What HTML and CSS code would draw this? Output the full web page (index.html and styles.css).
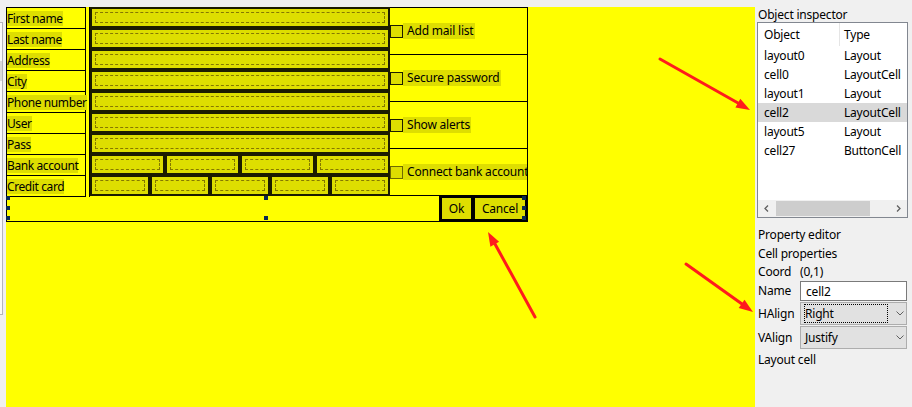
FILE: index.html
```html
<!DOCTYPE html>
<html lang="en">
<head>
<meta charset="utf-8">
<title>Layout designer</title>
<link rel="stylesheet" href="styles.css">
</head>
<body>
<div class="app">
  <div class="workspace">
    <div class="ghost"><div class="ghost-sel"></div></div>
    <div class="canvas">
      <div class="form">
        <div class="labels">
          <div class="lbl"><span>First name</span></div>
          <div class="lbl"><span>Last name</span></div>
          <div class="lbl"><span>Address</span></div>
          <div class="lbl"><span>City</span></div>
          <div class="lbl"><span>Phone number</span></div>
          <div class="lbl"><span>User</span></div>
          <div class="lbl"><span>Pass</span></div>
          <div class="lbl"><span>Bank account</span></div>
          <div class="lbl"><span>Credit card</span></div>
        </div>
        <div class="fields">
          <div class="frow"><div class="inp"><i></i></div></div>
          <div class="frow"><div class="inp"><i></i></div></div>
          <div class="frow"><div class="inp"><i></i></div></div>
          <div class="frow"><div class="inp"><i></i></div></div>
          <div class="frow"><div class="inp"><i></i></div></div>
          <div class="frow"><div class="inp"><i></i></div></div>
          <div class="frow"><div class="inp"><i></i></div></div>
          <div class="frow"><div class="inp"><i></i></div><div class="inp"><i></i></div><div class="inp"><i></i></div><div class="inp"><i></i></div></div>
          <div class="frow"><div class="inp"><i></i></div><div class="inp"><i></i></div><div class="inp"><i></i></div><div class="inp"><i></i></div><div class="inp"><i></i></div></div>
        </div>
        <div class="checks">
          <div class="chk"><span class="box"></span><span class="txt">Add mail list</span></div>
          <div class="chk"><span class="box"></span><span class="txt">Secure password</span></div>
          <div class="chk"><span class="box"></span><span class="txt">Show alerts</span></div>
          <div class="chk"><span class="box box-soft"></span><span class="txt">Connect bank account</span></div>
        </div>
        <div class="footer">
          <div class="btns"><span class="btn ok">Ok</span><span class="btn cancel">Cancel</span></div>
          <span class="h h-l1"></span><span class="h h-l2"></span><span class="h h-l3"></span>
          <span class="h h-m1"></span><span class="h h-m3"></span>
          <span class="h h-r1"></span><span class="h h-r2"></span><span class="h h-r3"></span>
        </div>
      </div>
    </div>
  </div>

  <aside class="inspector">
    <div class="title">Object inspector</div>
    <div class="list">
      <div class="lhead"><span>Object</span><span class="col2">Type</span></div>
      <div class="lbody">
        <div class="lrow"><span>layout0</span><span>Layout</span></div>
        <div class="lrow"><span>cell0</span><span>LayoutCell</span></div>
        <div class="lrow"><span>layout1</span><span>Layout</span></div>
        <div class="lrow sel"><span>cell2</span><span>LayoutCell</span></div>
        <div class="lrow"><span>layout5</span><span>Layout</span></div>
        <div class="lrow"><span>cell27</span><span>ButtonCell</span></div>
      </div>
      <div class="hscroll">
        <span class="sarrow"><svg width="17" height="17" viewBox="0 0 17 17"><path d="M10 5.5 L7 8.5 L10 11.5" fill="none" stroke="#606060" stroke-width="1.3"/></svg></span>
        <span class="thumb"></span>
        <span class="strack"></span>
        <span class="sarrow"><svg width="17" height="17" viewBox="0 0 17 17"><path d="M7 5.5 L10 8.5 L7 11.5" fill="none" stroke="#606060" stroke-width="1.3"/></svg></span>
      </div>
    </div>
    <div class="pe-title">Property editor</div>
    <div class="pe-sub">Cell properties</div>
    <div class="props">
      <span class="plabel r-coord">Coord</span><span class="pval r-coord">(0,1)</span>
      <span class="plabel">Name</span><span class="field">cell2</span>
      <span class="plabel">HAlign</span>
      <span class="select"><span class="focus">Right</span><svg class="chev" width="8" height="5" viewBox="0 0 8 5"><path d="M0.5 0.5 L4 4 L7.5 0.5" fill="none" stroke="#606060" stroke-width="1"/></svg></span>
      <span class="plabel">VAlign</span>
      <span class="select"><span class="nofocus">Justify</span><svg class="chev" width="8" height="5" viewBox="0 0 8 5"><path d="M0.5 0.5 L4 4 L7.5 0.5" fill="none" stroke="#606060" stroke-width="1"/></svg></span>
    </div>
    <div class="pe-foot">Layout cell</div>
  </aside>

  <svg class="arrows" width="912" height="407" viewBox="0 0 912 407">
    <g stroke="#ff1c1c" stroke-width="3" stroke-linecap="round" fill="#ff1c1c">
      <line x1="660" y1="59" x2="738" y2="103"/>
      <polygon stroke="none" points="750,110 735.4,107.5 740.3,98.8"/>
      <line x1="535" y1="317" x2="495" y2="244"/>
      <polygon stroke="none" points="488,232 499.1,241.8 490.4,246.7"/>
      <line x1="686" y1="264" x2="742" y2="304"/>
      <polygon stroke="none" points="753,312 738.7,307.9 744.5,299.8"/>
    </g>
  </svg>
</div>
</body>
</html>
```
FILE: styles.css
```css
* { box-sizing: border-box; }

body {
  margin: 0;
  font: 12px "Noto Sans", "DejaVu Sans", sans-serif;
  letter-spacing: -0.2px;
  color: #000;
  background: #f0f0f0;
  overflow: hidden;
}

.app {
  position: relative;
  display: grid;
  grid-template-columns: 755px 157px;
  height: 407px;
}

/* ---------- design workspace ---------- */
.workspace {
  display: grid;
  grid-template-columns: 6px 1fr;
  padding-top: 7px;
}

.ghost {
  margin-top: 15px;
  width: 3px;
  height: 293px;
  background: #fafafa;
  border: 1px solid #b4b4bc;
  border-left: 0;
}
.ghost-sel {
  margin-top: 38px;
  height: 20px;
  background: #d9d9d9;
}

.canvas {
  background: #ffff00;
}

.form {
  display: grid;
  grid-template-columns: 83px 301px 138px;
  width: 522px;
}

.labels {
  width: 80px;
  display: flex;
  flex-direction: column;
  border: 1px solid #000;
  border-bottom: 0;
}
.lbl {
  height: 21px;
  display: flex;
  align-items: center;
  border-bottom: 1px solid #000;
}
.lbl span {
  background: #dede00;
  line-height: 15px;
  white-space: nowrap;
  letter-spacing: -0.4px;
}

.fields {
  border-left: 1px solid #000;
  display: flex;
  flex-direction: column;
}
.frow {
  display: flex;
  height: 21px;
}
.inp {
  flex: 1;
  border: 2px solid #1c1c00;
  background: #dede00;
  padding: 3px;
}
.inp i {
  display: block;
  height: 100%;
  border: 1px dashed #857800;
}

.checks {
  display: flex;
  flex-direction: column;
  border-top: 1px solid #000;
  border-right: 1px solid #000;
}
.chk {
  height: 47px;
  display: flex;
  align-items: center;
  border-bottom: 1px solid #000;
  overflow: hidden;
}
.box {
  flex: none;
  width: 13px;
  height: 13px;
  border: 1px solid #1c1c00;
  background: #dede00;
}
.box-soft { border-color: #6e6a00; }
.txt {
  background: #dede00;
  padding: 0 1px 0 4px;
  line-height: 16px;
  white-space: nowrap;
}

.footer {
  grid-column: 1 / -1;
  position: relative;
  height: 25px;
  border-left: 1px solid #000;
  border-bottom: 1px solid #000;
  display: flex;
  justify-content: flex-end;
}
.btns {
  display: flex;
  gap: 4px;
  margin-top: -2px;
  height: 27px;
  border: 3px solid #000;
  background: #000;
}
.btn {
  display: flex;
  align-items: center;
  justify-content: center;
  background: #dede00;
}
.ok { width: 29px; }
.cancel { width: 50px; }

.h {
  position: absolute;
  width: 4px;
  height: 4px;
  background: #0b2a50;
}
.h-l1 { left: -1px; top: -1px; }
.h-l2 { left: -1px; top: 9px; }
.h-l3 { left: -1px; top: 19px; }
.h-m1 { left: 257px; top: -1px; }
.h-m3 { left: 257px; top: 19px; }
.h-r1 { left: 515px; top: -1px; }
.h-r2 { left: 515px; top: 9px; }
.h-r3 { left: 515px; top: 19px; }

/* ---------- inspector panel ---------- */
.inspector {
  display: flex;
  flex-direction: column;
  padding: 7px 0 0 3px;
}
.title {
  line-height: 15px;
  height: 15px;
}
.list {
  margin-left: -1px;
  width: 151px;
  height: 196px;
  border: 1px solid #828790;
  background: #fff;
  display: flex;
  flex-direction: column;
}
.lhead {
  height: 23px;
  display: grid;
  grid-template-columns: 81px 1fr;
}
.lhead span {
  display: flex;
  align-items: center;
  padding-left: 6px;
}
.lhead .col2 {
  border-left: 1px solid #e5e5e5;
  padding-left: 4px;
}
.lbody { flex: 1; }
.lrow {
  height: 19px;
  display: grid;
  grid-template-columns: 86px 1fr;
  align-items: center;
}
.lrow span:first-child { padding-left: 6px; }
.lrow.sel { background: #d9d9d9; }

.hscroll {
  height: 17px;
  display: flex;
  background: #f0f0f0;
}
.sarrow {
  width: 17px;
  height: 17px;
  flex: none;
}
.sarrow svg { display: block; }
.thumb {
  width: 94px;
  margin: 1px 0 1px 1px;
  background: #cdcdcd;
}
.strack { flex: 1; }

.pe-title {
  margin-top: 9px;
  line-height: 16px;
}
.pe-sub {
  margin-top: 3px;
  line-height: 16px;
}
.props {
  margin-top: 2px;
  display: grid;
  grid-template-columns: 42px 107px;
  grid-template-rows: 16px 20px 23px 23px;
  row-gap: 1px;
  align-items: center;
}
.plabel, .pval { line-height: 16px; }
.field {
  height: 20px;
  border: 1px solid #7a7a7a;
  background: #fff;
  padding-left: 5px;
  display: flex;
  align-items: center;
}
.select {
  height: 23px;
  border: 1px solid #adadad;
  background: #e1e1e1;
  padding-left: 3px;
  display: flex;
  align-items: center;
}
.focus {
  width: 84px;
  height: 19px;
  border: 1px dotted #000;
  display: flex;
  align-items: center;
}
.nofocus {
  width: 84px;
  height: 19px;
  border: 1px solid transparent;
  display: flex;
  align-items: center;
}
.chev {
  margin-left: 8px;
  display: block;
}
.pe-foot {
  margin-top: 3px;
  line-height: 16px;
}

.arrows {
  position: absolute;
  left: 0;
  top: 0;
  pointer-events: none;
}
```
